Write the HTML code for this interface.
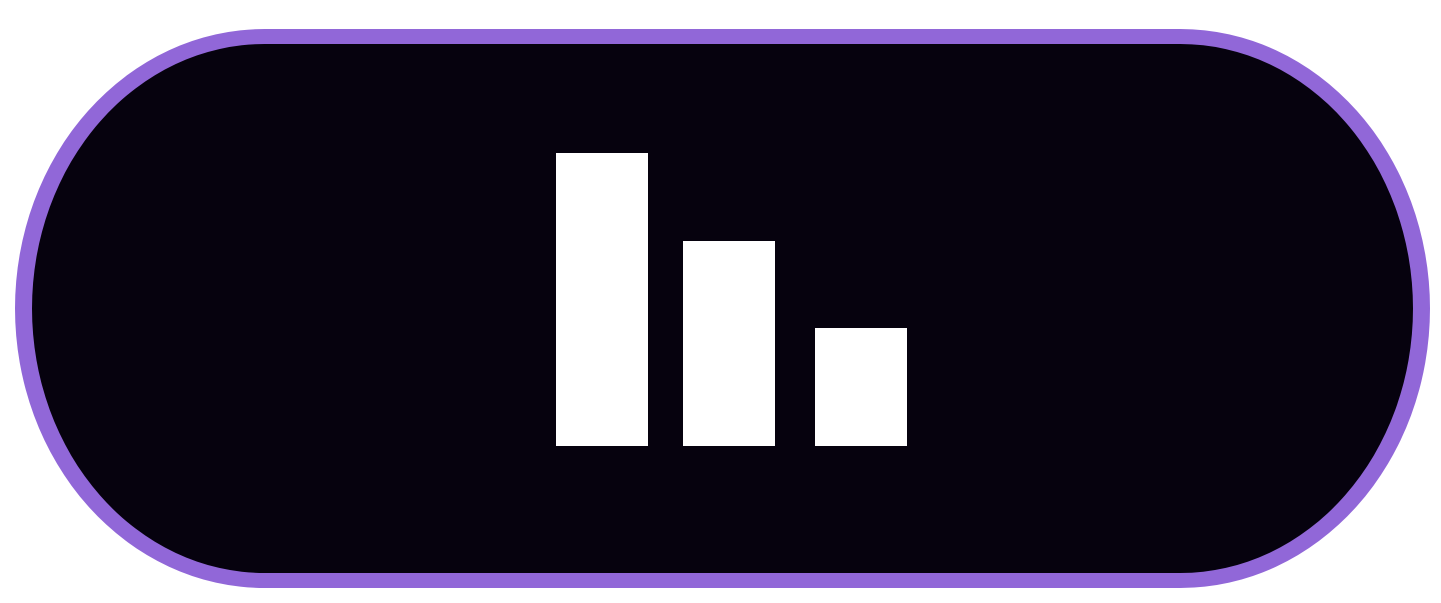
<!DOCTYPE html>
<html><head><style>
html,body{margin:0;padding:0;background:#fff;width:1441px;height:603px;overflow:hidden}
.pill{position:absolute;left:15px;top:29px;width:1415px;height:559px;box-sizing:border-box;border-radius:250px / 280px;background:#06020e;border:17px solid #9167d8;border-top-width:15px;border-bottom-width:15px}
.b{position:absolute;background:#fff}
</style></head><body>
<div class="pill"></div>
<div class="b" style="left:556px;top:153px;width:92px;height:293px"></div>
<div class="b" style="left:683px;top:241px;width:92px;height:205px"></div>
<div class="b" style="left:815px;top:328px;width:92px;height:118px"></div>
</body></html>
